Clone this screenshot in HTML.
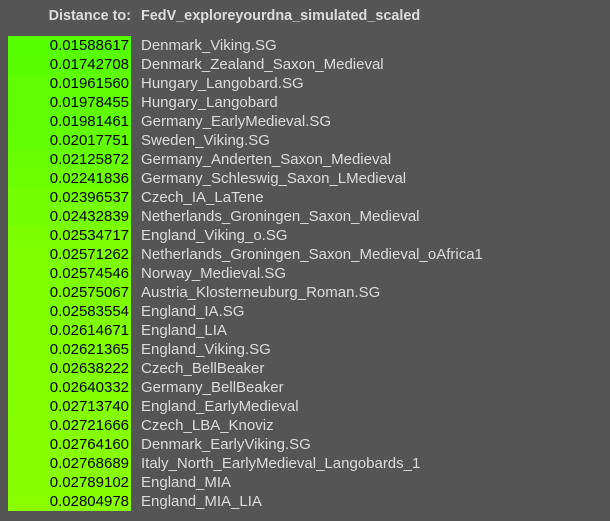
<!DOCTYPE html>
<html><head><style>
body{margin:0;background:#555555;width:610px;height:521px;overflow:hidden;font-family:"Liberation Sans",Arial,sans-serif;}
.h{position:absolute;top:8px;font-size:14.4px;font-weight:bold;color:#dcdcdc;}
#t{position:absolute;left:8px;top:36px;}
.r{height:19px;line-height:19px;white-space:nowrap;font-size:15px;overflow:hidden;}
.n{display:inline-block;width:121px;height:19px;text-align:right;padding-right:2px;color:#000;vertical-align:top;}
.l{display:inline-block;padding-left:10px;color:#dcdcdc;vertical-align:top;}
</style></head><body>
<div class="h" style="right:479px">Distance to:</div>
<div class="h" style="left:141px">FedV_exploreyourdna_simulated_scaled</div>
<div id="t">
<div class="r"><span class="n" style="background:rgb(85,255,0)">0.01588617</span><span class="l">Denmark_Viking.SG</span></div>
<div class="r"><span class="n" style="background:rgb(89,255,0)">0.01742708</span><span class="l">Denmark_Zealand_Saxon_Medieval</span></div>
<div class="r"><span class="n" style="background:rgb(95,255,0)">0.01961560</span><span class="l">Hungary_Langobard.SG</span></div>
<div class="r"><span class="n" style="background:rgb(95,255,0)">0.01978455</span><span class="l">Hungary_Langobard</span></div>
<div class="r"><span class="n" style="background:rgb(96,255,0)">0.01981461</span><span class="l">Germany_EarlyMedieval.SG</span></div>
<div class="r"><span class="n" style="background:rgb(97,255,0)">0.02017751</span><span class="l">Sweden_Viking.SG</span></div>
<div class="r"><span class="n" style="background:rgb(103,255,0)">0.02125872</span><span class="l">Germany_Anderten_Saxon_Medieval</span></div>
<div class="r"><span class="n" style="background:rgb(109,255,0)">0.02241836</span><span class="l">Germany_Schleswig_Saxon_LMedieval</span></div>
<div class="r"><span class="n" style="background:rgb(116,255,0)">0.02396537</span><span class="l">Czech_IA_LaTene</span></div>
<div class="r"><span class="n" style="background:rgb(118,255,0)">0.02432839</span><span class="l">Netherlands_Groningen_Saxon_Medieval</span></div>
<div class="r"><span class="n" style="background:rgb(123,255,0)">0.02534717</span><span class="l">England_Viking_o.SG</span></div>
<div class="r"><span class="n" style="background:rgb(125,255,0)">0.02571262</span><span class="l">Netherlands_Groningen_Saxon_Medieval_oAfrica1</span></div>
<div class="r"><span class="n" style="background:rgb(125,255,0)">0.02574546</span><span class="l">Norway_Medieval.SG</span></div>
<div class="r"><span class="n" style="background:rgb(125,255,0)">0.02575067</span><span class="l">Austria_Klosterneuburg_Roman.SG</span></div>
<div class="r"><span class="n" style="background:rgb(126,255,0)">0.02583554</span><span class="l">England_IA.SG</span></div>
<div class="r"><span class="n" style="background:rgb(127,255,0)">0.02614671</span><span class="l">England_LIA</span></div>
<div class="r"><span class="n" style="background:rgb(128,255,0)">0.02621365</span><span class="l">England_Viking.SG</span></div>
<div class="r"><span class="n" style="background:rgb(129,255,0)">0.02638222</span><span class="l">Czech_BellBeaker</span></div>
<div class="r"><span class="n" style="background:rgb(129,255,0)">0.02640332</span><span class="l">Germany_BellBeaker</span></div>
<div class="r"><span class="n" style="background:rgb(132,255,0)">0.02713740</span><span class="l">England_EarlyMedieval</span></div>
<div class="r"><span class="n" style="background:rgb(133,255,0)">0.02721666</span><span class="l">Czech_LBA_Knoviz</span></div>
<div class="r"><span class="n" style="background:rgb(135,255,0)">0.02764160</span><span class="l">Denmark_EarlyViking.SG</span></div>
<div class="r"><span class="n" style="background:rgb(135,255,0)">0.02768689</span><span class="l">Italy_North_EarlyMedieval_Langobards_1</span></div>
<div class="r"><span class="n" style="background:rgb(136,255,0)">0.02789102</span><span class="l">England_MIA</span></div>
<div class="r"><span class="n" style="background:rgb(138,255,0)">0.02804978</span><span class="l">England_MIA_LIA</span></div>
</div>
</body></html>
